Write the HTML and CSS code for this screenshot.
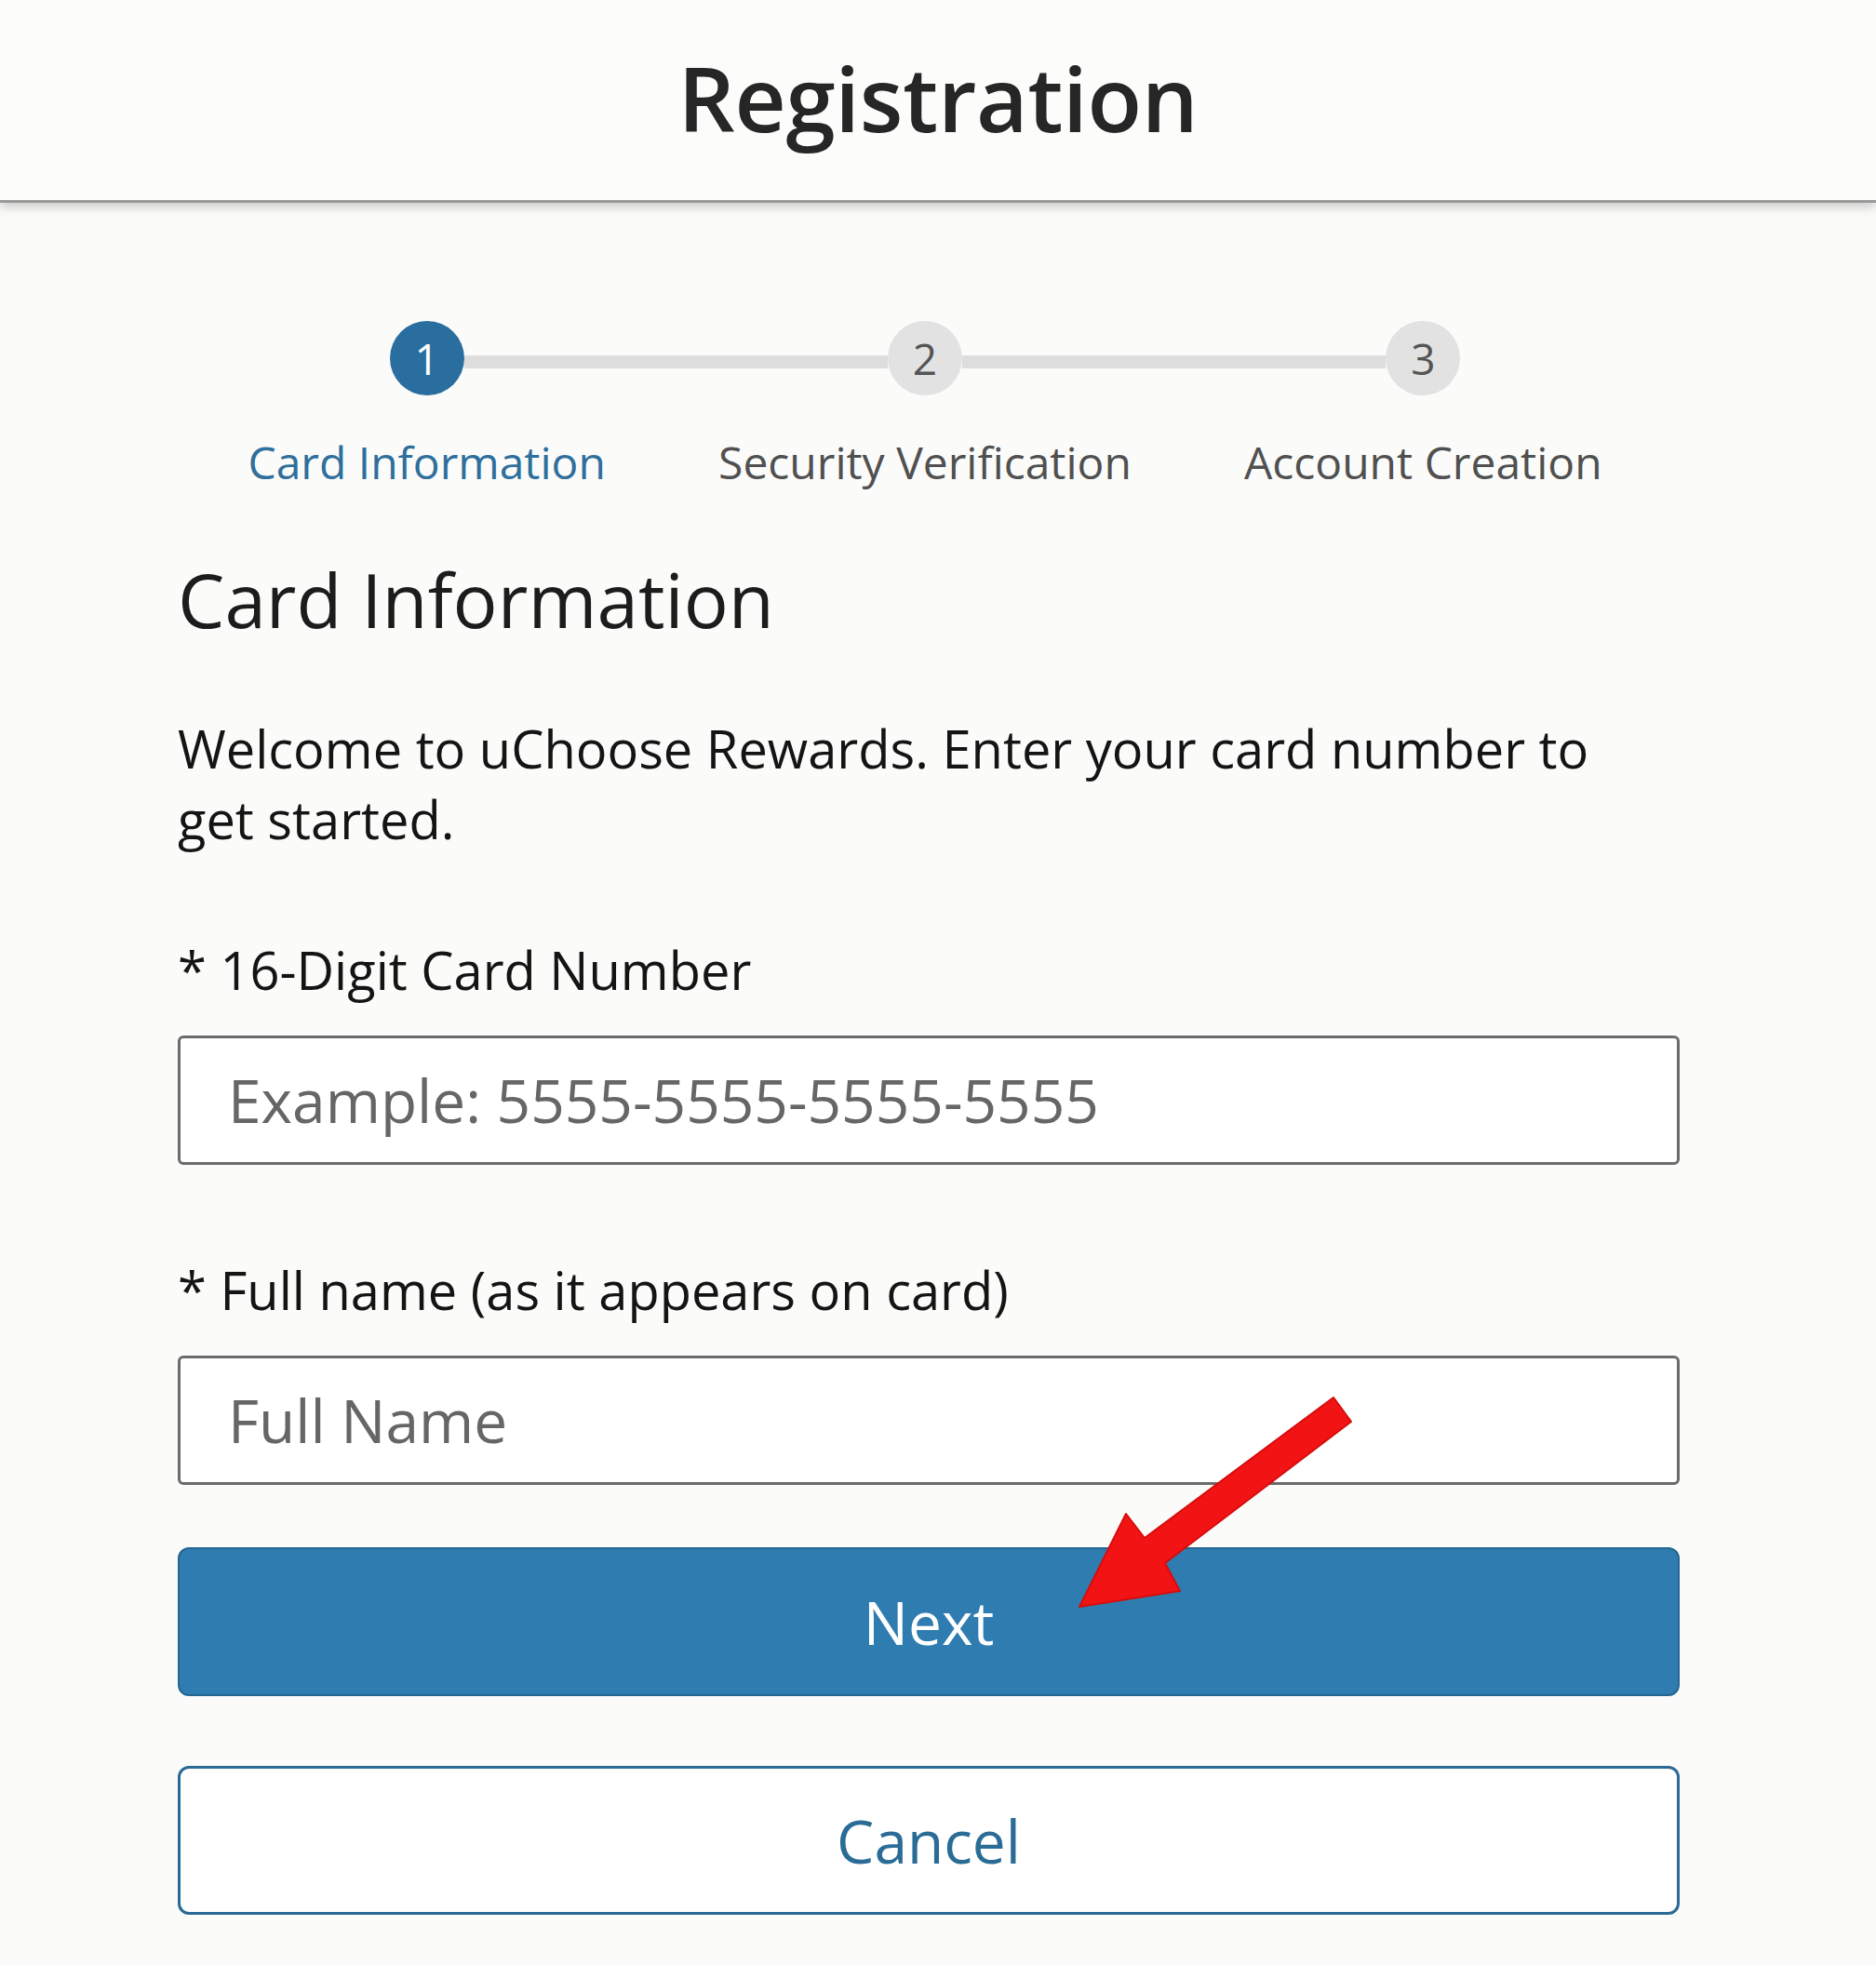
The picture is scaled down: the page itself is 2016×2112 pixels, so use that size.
FILE: index.html
```html
<!DOCTYPE html>
<html lang="en">
<head>
<meta charset="utf-8">
<title>Registration</title>
<link rel="stylesheet" href="styles.css">
</head>
<body>
<header class="topbar">
  <h1 class="topbar-title">Registration</h1>
</header>
<main class="content">
  <ol class="stepper">
    <li class="step is-active">
      <div class="step-track"><span class="step-line is-hidden"></span><span class="step-dot">1</span><span class="step-line"></span></div>
      <span class="step-label">Card Information</span>
    </li>
    <li class="step">
      <div class="step-track"><span class="step-line"></span><span class="step-dot">2</span><span class="step-line"></span></div>
      <span class="step-label">Security Verification</span>
    </li>
    <li class="step">
      <div class="step-track"><span class="step-line"></span><span class="step-dot">3</span><span class="step-line is-hidden"></span></div>
      <span class="step-label">Account Creation</span>
    </li>
  </ol>
  <h2 class="section-title">Card Information</h2>
  <p class="intro">Welcome to uChoose Rewards. Enter your card number to get started.</p>
  <form class="card-form">
    <label class="field-label" for="card">* 16-Digit Card Number</label>
    <input class="field-input" id="card" type="text" placeholder="Example: 5555-5555-5555-5555">
    <label class="field-label field-label-second" for="name">* Full name (as it appears on card)</label>
    <input class="field-input" id="name" type="text" placeholder="Full Name">
    <button class="btn btn-primary" type="button">Next</button>
    <button class="btn btn-outline" type="button">Cancel</button>
  </form>
</main>
<svg class="annotation" width="2016" height="2112" viewBox="0 0 2016 2112" aria-hidden="true">
  <polygon points="1160,1727 1210,1627 1230,1653 1433,1502 1452,1528 1252,1680 1268,1710" fill="#f21414" stroke="#d60d0d" stroke-width="2" stroke-linejoin="round"/>
</svg>
</body>
</html>
```
FILE: styles.css
```css
* { box-sizing: border-box; }

html, body {
  margin: 0;
  padding: 0;
}

body {
  position: relative;
  min-height: 2112px;
  background: #fbfbfa;
  font-family: "Open Sans", "Noto Sans", "Liberation Sans", sans-serif;
  color: #161616;
}

.topbar {
  height: 218px;
  padding-top: 57px;
  background: #fcfcfb;
  border-bottom: 3px solid #9a9a9a;
  box-shadow: 0 5px 10px rgba(0, 0, 0, 0.18);
  text-align: center;
}

.topbar-title {
  margin: 0;
  font-size: 96px;
  line-height: 96px;
  font-weight: 600;
  color: #262626;
  letter-spacing: -0.3px;
}

.content {
  width: 1614px;
  margin-left: 191px;
  padding-top: 127px;
}

.stepper {
  list-style: none;
  margin: 0;
  padding: 0;
  width: 1606px;
  display: grid;
  grid-template-columns: repeat(3, 1fr);
}

.step {
  display: flex;
  flex-direction: column;
  align-items: center;
}

.step-track {
  width: 100%;
  display: flex;
  align-items: center;
}

.step-line {
  flex: 1;
  height: 14px;
  margin-top: 8px;
  background: #dddddd;
}

.step-line.is-hidden { background: transparent; }

.step-dot {
  width: 80px;
  height: 80px;
  flex: 0 0 80px;
  border-radius: 50%;
  background: #e2e2e2;
  color: #555555;
  font-size: 46px;
  line-height: 80px;
  text-align: center;
}

.step.is-active .step-dot {
  background: #2a6e9f;
  color: #ffffff;
}

.step-label {
  margin-top: 39px;
  font-size: 48px;
  line-height: 65px;
  color: #505050;
  white-space: nowrap;
}

.step.is-active .step-label { color: #2f6f9c; }

.section-title {
  margin: 67px 0 0;
  font-size: 80px;
  line-height: 96px;
  font-weight: 400;
  color: #1c1c1c;
}

.intro {
  margin: 74px 0 0;
  max-width: 1580px;
  font-size: 56px;
  line-height: 76px;
  color: #141414;
}

.card-form {
  display: flex;
  flex-direction: column;
  margin-top: 86px;
}

.field-label {
  font-size: 56px;
  line-height: 76px;
  color: #141414;
}

.field-label-second { margin-top: 96px; }

.field-input {
  margin-top: 33px;
  width: 100%;
  height: 139px;
  padding: 0 0 0 51px;
  border: 3px solid #6b6b6b;
  border-radius: 6px;
  background: #ffffff;
  font-family: inherit;
  font-size: 64px;
  color: #333333;
  outline: none;
}

.field-input::placeholder { color: #666666; }

.btn {
  width: 100%;
  height: 160px;
  border-radius: 12px;
  font-family: inherit;
  font-size: 64px;
  cursor: pointer;
}

.btn-primary {
  margin-top: 67px;
  background: #2f7db0;
  border: 2px solid #246592;
  color: #ffffff;
}

.btn-outline {
  margin-top: 75px;
  background: #ffffff;
  border: 3px solid #2a6a94;
  color: #2b6c97;
}

.annotation {
  position: absolute;
  top: 0;
  left: 0;
  pointer-events: none;
}
```
